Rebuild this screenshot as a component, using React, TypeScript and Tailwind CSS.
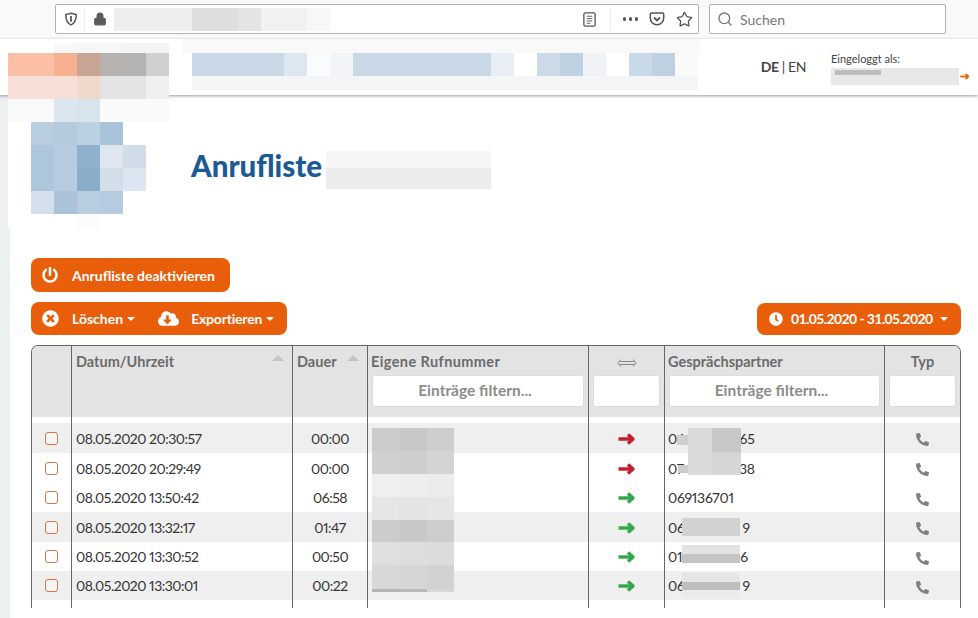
import React from "react";
import { Lock, Search, Star } from "lucide-react";
import { FaClock, FaCloudDownloadAlt, FaPhoneAlt, FaPowerOff, FaTimesCircle } from "react-icons/fa";

const cols = "grid grid-cols-[40px_221px_75px_221px_76px_220px_76px]";
const cellLine = "border-r border-[#666]";

interface CallRow {
  date: string;
  duration: string;
  left: string;
  right: string;
  gap: string;
  out: boolean;
  height: string;
  bg: string;
}

const calls: CallRow[] = [
  { date: "08.05.2020 20:30:57", duration: "00:00", left: "06", right: "65", gap: "w-[55px]", out: true, height: "h-[30px]", bg: "bg-[#efefef]" },
  { date: "08.05.2020 20:29:49", duration: "00:00", left: "07", right: "38", gap: "w-[55px]", out: true, height: "h-[30px]", bg: "bg-white" },
  { date: "08.05.2020 13:50:42", duration: "06:58", left: "069136701", right: "", gap: "w-0", out: false, height: "h-[29px]", bg: "bg-white" },
  { date: "08.05.2020 13:32:17", duration: "01:47", left: "06", right: "9", gap: "w-[58px]", out: false, height: "h-[30px]", bg: "bg-[#efefef]" },
  { date: "08.05.2020 13:30:52", duration: "00:50", left: "01", right: "6", gap: "w-[58px]", out: false, height: "h-[29px]", bg: "bg-white" },
  { date: "08.05.2020 13:30:01", duration: "00:22", left: "06", right: "9", gap: "w-[58px]", out: false, height: "h-[29px]", bg: "bg-[#efefef]" },
];

const logoCells = [
  ["bg-white", "bg-white", "bg-[#f8f8f8]", "bg-[#f6f6f6]", "bg-[#f6f6f6]", "bg-[#f4f4f4]", "bg-[#f4f4f4]"],
  ["bg-[#fbbfa6]", "bg-[#fbbfa6]", "bg-[#f8b090]", "bg-[#c9a595]", "bg-[#b5b2b0]", "bg-[#b3b3b3]", "bg-[#cfcfcf]"],
  ["bg-[#f8e0d8]", "bg-[#f8e0d8]", "bg-[#f6e0d8]", "bg-[#f0d8cd]", "bg-[#e3e3e3]", "bg-[#e3e3e3]", "bg-[#efefef]"],
  ["bg-[#fafafa]", "bg-[#fafafa]", "bg-[#dbe6ef]", "bg-[#d7e4ee]", "bg-[#fafafa]", "bg-[#fafafa]", "bg-[#fafafa]"],
  ["bg-white", "bg-[#b8cde0]", "bg-[#b5cadd]", "bg-[#bcd0e3]", "bg-[#a8c3da]", "bg-white", "bg-white"],
  ["bg-white", "bg-[#adc6dc]", "bg-[#b7cce0]", "bg-[#8fb1cd]", "bg-[#dfe6ef]", "bg-[#d0dce8]", "bg-white"],
  ["bg-white", "bg-[#adc6dc]", "bg-[#b7cce0]", "bg-[#8aadc9]", "bg-[#d3dee9]", "bg-[#dce6f0]", "bg-white"],
  ["bg-white", "bg-[#d3dfeb]", "bg-[#aac3da]", "bg-[#b8cde0]", "bg-[#b5cbdf]", "bg-white", "bg-white"],
  ["bg-white", "bg-white", "bg-white", "bg-[#fbfbfb]", "bg-white", "bg-white", "bg-white"],
];

const navCells = [
  "w-[92px] bg-[#c9d8e6]",
  "w-[23px] bg-[#dde7f0]",
  "w-[23px] bg-[#fafbfc]",
  "w-[23px] bg-[#f2f5f8]",
  "w-[138px] bg-[#c9d8e6]",
  "w-[23px] bg-[#e8eef4]",
  "w-[23px] bg-white",
  "w-[23px] bg-[#cddbe8]",
  "w-[23px] bg-[#c0d2e2]",
  "w-[23px] bg-[#eff3f7]",
  "w-[23px] bg-white",
  "w-[23px] bg-[#cad9e7]",
  "w-[23px] bg-[#bed0e1]",
  "w-[23px] bg-[#fafafa]",
];

const numberBlur = [
  { h: "h-[23px]", cells: ["bg-[#cbcbcb]", "bg-[#c8c8c8]", "bg-[#cdcdcd]"] },
  { h: "h-[23px]", cells: ["bg-[#d0d0d0]", "bg-[#cecece]", "bg-[#d4d4d4]"] },
  { h: "h-[23px]", cells: ["bg-[#f0f0f0]", "bg-[#eeeeee]", "bg-[#ececec]"] },
  { h: "h-[23px]", cells: ["bg-[#e6e6e6]", "bg-[#e4e4e4]", "bg-[#e6e6e6]"] },
  { h: "h-[22px]", cells: ["bg-[#cccccc]", "bg-[#c8c8c8]", "bg-[#cdcdcd]"] },
  { h: "h-[23px]", cells: ["bg-[#e0e0e0]", "bg-[#dddddd]", "bg-[#dcdcdc]"] },
  { h: "h-[24px]", cells: ["bg-[#d8d8d8]", "bg-[#d6d6d6]", "bg-[#d2d2d2]"] },
  { h: "h-[3px]", cells: ["bg-[#b4b4b4]", "bg-[#b8b8b8]", "bg-[#d8d8d8]"] },
];

const Caret = () => (
  <span className="inline-block border-x-[4px] border-t-[4px] border-x-transparent border-t-white" />
);

const SortUp = () => (
  <span className="mr-[4px] mt-[4px] flex border-x-[6px] border-b-[6px] border-x-transparent border-b-[#c4c4c4]" />
);

const Arrow = ({ className }: { className: string }) => (
  <svg viewBox="0 0 18 12" className={className} fill="none" stroke="currentColor" strokeWidth="3.4" strokeLinejoin="round">
    <path d="M.5 6 H14.500" />
    <path d="M10 1.500 L15 6 L10 10.500" />
  </svg>
);

const Filter = ({ label }: { label?: string }) => (
  <div className="flex h-[32px] items-center justify-center rounded-[3px] border border-[#dcdcdc] bg-white pr-[6px] text-[15.5px] font-bold text-[#8c8c8c]">
    {label}
  </div>
);

const HeadCell = ({ children, className = "" }: { children?: React.ReactNode; className?: string }) => (
  <div className={`${cellLine} ${className}`}>{children}</div>
);

const PageHeader = () => (
  <>
    <div className="flex h-[39px] items-start gap-[10px] bg-[#f9f9fa] pl-[55px] pt-[4px]">
      <div className="flex h-[30px] w-[644px] items-center rounded-[2px] border border-[#b1b1b3] bg-white">
        <svg viewBox="0 0 16 16" className="ml-[8px] h-[14px] w-[14px] text-[#555]" fill="none" stroke="currentColor" strokeWidth="1.7">
          <path d="M8 1.500 L14 3 C14 9 12.500 12.500 8 14.800 C3.500 12.500 2 9 2 3 Z" />
          <path d="M8 4.500 V11" strokeWidth="2" />
        </svg>
        <span className="ml-[6px] h-[22px] w-px bg-[#ececec]" />
        <Lock size={14} className="ml-[8px] fill-[#5b5b5b] text-[#5b5b5b]" />
        <div className="ml-[7px] flex h-[23px]">
          <span className="w-[78px] bg-[#eeeeee]" />
          <span className="w-[46px] bg-[#dedede]" />
          <span className="w-[23px] bg-[#e4e4e4]" />
          <span className="w-[46px] bg-[#f1f1f1]" />
          <span className="w-[23px] bg-[#f7f7f7]" />
        </div>
        <svg viewBox="0 0 16 16" className="ml-auto h-[15px] w-[15px] text-[#555]" fill="none" stroke="currentColor" strokeWidth="1.4">
          <rect x="2" y="1" width="12" height="14" rx="1.500" />
          <path d="M5 4.500 H11 M5 7 H11 M5 9.500 H11 M5 12 H9" strokeWidth="1" />
        </svg>
        <span className="ml-[13px] h-[22px] w-px bg-[#ececec]" />
        <span className="ml-[12px] flex gap-[2.500px]">
          <i className="h-[3.500px] w-[3.500px] rounded-full bg-[#555]" />
          <i className="h-[3.500px] w-[3.500px] rounded-full bg-[#555]" />
          <i className="h-[3.500px] w-[3.500px] rounded-full bg-[#555]" />
        </span>
        <svg viewBox="0 0 16 16" className="ml-[11px] h-[16px] w-[16px] text-[#555]" fill="none" stroke="currentColor" strokeWidth="1.5">
          <path d="M2.500 2 H13.500 C14.300 2 14.700 2.500 14.700 3.200 V7 C14.700 10.800 11.800 13.800 8 13.800 C4.200 13.800 1.300 10.800 1.300 7 V3.200 C1.300 2.500 1.700 2 2.500 2 Z" />
          <path d="M5 6.500 L8 9.500 L11 6.500" strokeWidth="1.800" />
        </svg>
        <Star size={17} strokeWidth={1.8} className="ml-[11px] mr-[5px] text-[#555]" />
      </div>
      <div className="flex h-[30px] w-[237px] items-center rounded-[2px] border border-[#b1b1b3] bg-white pl-[7px]">
        <Search size={16} className="text-[#777]" />
        <span className="ml-[7px] text-[14px] text-[#777]">Suchen</span>
      </div>
    </div>
    <div className="relative z-10 flex h-[56px] items-start justify-end bg-white pr-[8px] shadow-[0_1px_3px_rgba(0,0,0,0.4)]">
      <div className="mr-[25px] mt-[19px] text-[14px] leading-[18px] tracking-[-0.4px] text-[#444]">
        <b>DE</b> | EN
      </div>
      <div className="w-[139px] pt-[13px] text-[11px] leading-[13px] text-[#444]">
        <div>Eingeloggt als:</div>
        <div className="mt-[3px] flex items-center">
          <div className="h-[17px] w-[128px] bg-[#e8e8e8] pl-[4px] pt-[2px]">
            <div className="h-[5px] w-[46px] bg-[#bdbdbd]" />
          </div>
          <Arrow className="ml-[1px] h-[9px] w-[10px] text-[#e8610c]" />
        </div>
      </div>
    </div>
  </>
);

const CallTable = () => (
  <div className="mt-[10px] w-[930px] overflow-hidden rounded-t-[7px] border-x border-t border-[#666] text-[14px] text-[#333] proportional-nums">
    <div className={`${cols} h-[71px] bg-[#e3e3e3] text-[14.5px] font-bold text-[#6b6b6b]`}>
      <HeadCell />
      <HeadCell className="flex items-start justify-between pl-[4px] pr-[4px] pt-[5px]">
        <span>Datum/Uhrzeit</span>
        <SortUp />
      </HeadCell>
      <HeadCell className="flex items-start justify-between pl-[4px] pr-[4px] pt-[5px]">
        <span>Dauer</span>
        <SortUp />
      </HeadCell>
      <HeadCell className="px-[4px] pt-[5px]">
        <div className="-ml-px h-[24px] tracking-[0.4px]">Eigene Rufnummer</div>
        <Filter label="Einträge filtern..." />
      </HeadCell>
      <HeadCell className="px-[4px] pt-[5px]">
        <div className="flex h-[24px] items-center justify-center">
          <svg viewBox="0 0 20 8" className="h-[8px] w-[20px] text-[#8a8a8a]" fill="none" stroke="currentColor" strokeWidth="1">
            <path d="M4 .5 L.8 4 L4 7.500 M16 .5 L19.200 4 L16 7.500 M2 2.500 H18 M2 5.500 H18" />
          </svg>
        </div>
        <Filter />
      </HeadCell>
      <HeadCell className="px-[4px] pt-[5px]">
        <div className="-ml-px h-[24px]">Gesprächspartner</div>
        <Filter label="Einträge filtern..." />
      </HeadCell>
      <HeadCell className="px-[4px] pt-[5px]">
        <div className="h-[24px] text-center">Typ</div>
        <Filter />
      </HeadCell>
    </div>
    <div className={`${cols} h-[6px]`}>
      {[0, 1, 2, 3, 4, 5, 6].map((i) => (
        <div key={i} className={cellLine} />
      ))}
    </div>
    {calls.map((call) => (
      <div key={call.date} className={`${cols} ${call.height} ${call.bg} items-stretch`}>
        <div className={`${cellLine} flex items-center justify-center pr-[1px]`}>
          <span className="h-[13px] w-[13px] rounded-[3px] border border-[#d2754a] bg-white/40" />
        </div>
        <div className={`${cellLine} flex items-center px-[4px] tracking-[-0.5px]`}>{call.date}</div>
        <div className={`${cellLine} flex items-center justify-center tracking-[-0.5px]`}>{call.duration}</div>
        <div className={cellLine} />
        <div className={`${cellLine} flex items-center justify-center pt-[1px]`}>
          <Arrow className={call.out ? "h-[12px] w-[18px] text-[#c4202c]" : "h-[12px] w-[18px] text-[#33a84a]"} />
        </div>
        <div className={`${cellLine} flex items-center px-[3px] tracking-[-0.3px]`}>
          {call.left}
          <span className={`inline-block ${call.gap}`} />
          {call.right}
        </div>
        <div className={`${cellLine} flex items-center justify-center pt-[3px]`}>
          <FaPhoneAlt size={13} className="text-[#808080]" />
        </div>
      </div>
    ))}
    <div className={`${cols} h-[8px]`}>
      {[0, 1, 2, 3, 4, 5, 6].map((i) => (
        <div key={i} className={cellLine} />
      ))}
    </div>
  </div>
);

export default function App() {
  return (
    <div className="relative h-[618px] w-[978px] overflow-hidden bg-white font-['Lato',sans-serif]">
      <PageHeader />
      <div className="flex h-[523px]">
        <div className="w-[10px] bg-[#eef1f1]" />
        <div className="flex-1 pl-[21px]">
          <div className="ml-[160px] mt-[51px] flex items-center">
            <h1 className="text-[29.500px] font-black leading-[40px] text-[#1c5a96]">Anrufliste</h1>
          </div>
          <div className="mt-[72px] flex h-[34px] w-[199px] items-center gap-[14px] rounded-[8px] bg-[#e85e0a] pl-[11px] text-[14px] font-bold text-white">
            <FaPowerOff size={16} />
            <span>Anrufliste deaktivieren</span>
          </div>
          <div className="mt-[10px] flex w-[930px] items-center justify-between">
            <div className="flex h-[33px] w-[256px] items-center rounded-[8px] bg-[#e85e0a] pl-[11px] text-[14px] font-bold text-white">
              <FaTimesCircle size={17} />
              <span className="ml-[13px]">Löschen</span>
              <span className="ml-[4px] flex"><Caret /></span>
              <FaCloudDownloadAlt size={21} className="ml-[23px]" />
              <span className="ml-[12px] tracking-[-0.2px]">Exportieren</span>
              <span className="ml-[4px] flex"><Caret /></span>
            </div>
            <div className="flex h-[32px] w-[204px] items-center gap-[8px] rounded-[8px] bg-[#e85e0a] pl-[12px] text-[14px] font-bold text-white">
              <FaClock size={14} />
              <span className="whitespace-nowrap tracking-[-0.6px]">01.05.2020 - 31.05.2020</span>
              <Caret />
            </div>
          </div>
          <CallTable />
        </div>
      </div>

      {/* verpixelte Bereiche liegen ueber dem Inhalt */}
      <div className="absolute left-[8px] top-[43px] z-20 grid grid-cols-[repeat(7,23px)] grid-rows-[10px_repeat(7,23px)_14px]">
        {logoCells.flat().map((c, i) => (
          <div key={i} className={c} />
        ))}
      </div>
      <div className="absolute left-[182px] top-[39px] z-20 h-[14px] w-[518px] bg-[#f9f9f9]" />
      <div className="absolute left-[192px] top-[53px] z-20">
        <div className="flex h-[23px]">
          {navCells.map((c) => (
            <div key={c} className={c} />
          ))}
        </div>
        <div className="h-[14px] w-[506px] bg-[#f4f5f6]" />
      </div>
      <div className="absolute left-[326px] top-[151px] z-20">
        <div className="h-[17px] w-[165px] bg-[#f5f5f5]" />
        <div className="h-[21px] w-[165px] bg-[#ececec]" />
      </div>
      <div className="absolute left-[372px] top-[428px] z-20 w-[82px]">
        {numberBlur.map((row, i) => (
          <div key={i} className={`${row.h} grid grid-cols-3`}>
            {row.cells.map((c, j) => (
              <div key={j} className={c} />
            ))}
          </div>
        ))}
      </div>
      <div className="absolute left-[688px] top-[428px] z-20 flex h-[47px] w-[53px]">
        <div className="w-[24px] bg-[#dadada]" />
        <div className="flex-1 bg-[#d6d6d6]">
          <div className="h-[24px] bg-[#c8c8c8]" />
        </div>
      </div>
      <div className="absolute left-[677px] top-[435px] z-20 h-[10px] w-[11px] bg-[#cfcfcf]" />
      <div className="absolute left-[678px] top-[465px] z-20 h-[8px] w-[10px] bg-[#cccccc]" />
      <div className="absolute left-[682px] top-[518px] z-20 h-[18px] w-[58px] bg-[#d2d2d2]" />
      <div className="absolute left-[682px] top-[545px] z-20 w-[58px]">
        <div className="h-[9px] bg-[#e3e3e3]" />
        <div className="h-[9px] bg-[#c5c5c5]" />
      </div>
      <div className="absolute left-[682px] top-[573px] z-20 w-[58px]">
        <div className="h-[9px] bg-[#e5e5e5]" />
        <div className="h-[8px] bg-[#bebebe]" />
        <div className="h-[8px] bg-[#ebebeb]" />
      </div>
    </div>
  );
}
